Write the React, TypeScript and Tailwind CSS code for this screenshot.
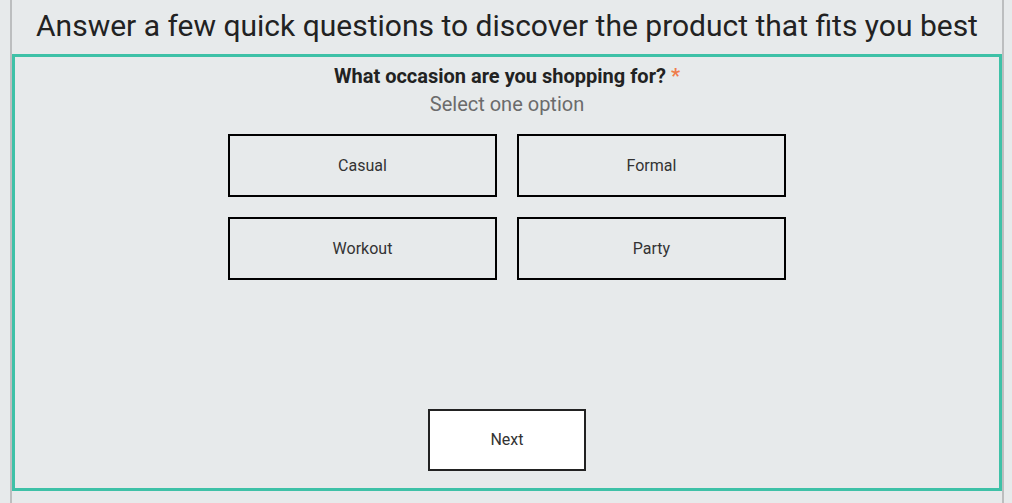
import React, { useState } from 'react';

const options = ['Casual', 'Formal', 'Workout', 'Party'];

const App: React.FC = () => {
  const [selected, setSelected] = useState<string | null>(null);

  return (
    <div className="w-[1012px] h-[503px] bg-[#e7eaeb] overflow-hidden font-['Roboto',sans-serif]">
      <div className="ml-[10px] w-[994px] h-full border-x-2 border-[#bcbebf] flex flex-col">
        <h1 className="h-[54px] flex items-center justify-center text-[30px] text-[#222] leading-none pb-[2px]">
          Answer a few quick questions to discover the product that fits you best
        </h1>
        <div className="w-[990px] h-[437px] border-[3px] border-[#3ec1a7] flex flex-col items-center pt-[7px]">
          <div className="text-[20px] font-bold text-[#222] leading-[24px]">
            What occasion are you shopping for? <span className="text-[#ef7d4c]">*</span>
          </div>
          <div className="text-[20px] text-[#6b6b6b] leading-[24px] mt-[4px]">Select one option</div>
          <div className="grid grid-cols-2 gap-5 mt-[18px] w-[558px]">
            {options.map((o) => (
              <button
                key={o}
                onClick={() => setSelected(o)}
                className={`h-[63px] border-2 border-black text-[16px] text-[#333] ${
                  selected === o ? 'bg-white' : 'bg-transparent'
                }`}
              >
                {o}
              </button>
            ))}
          </div>
          <div className="flex-1" />
          <button className="w-[158px] h-[62px] mb-[17px] bg-white border-2 border-[#222] text-[16px] text-[#333]">
            Next
          </button>
        </div>
      </div>
    </div>
  );
};

export default App;
